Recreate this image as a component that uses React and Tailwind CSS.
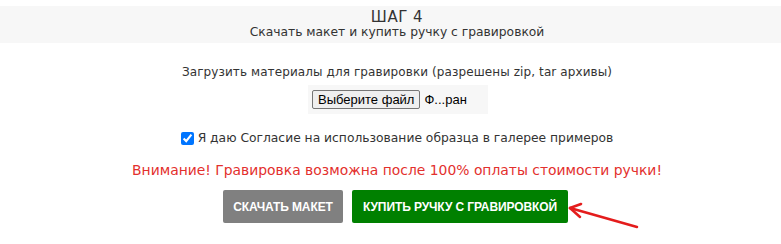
import { useState } from "react";

const sans = { fontFamily: '"DejaVu Sans", "Noto Sans", sans-serif' };
const arial = { fontFamily: '"Liberation Sans", Arial, sans-serif' };

const App = () => {
  const [agree, setAgree] = useState(true);

  return (
    <div className="w-[781px] h-[244px] bg-white overflow-hidden pt-[6px]" style={sans}>
      {/* step header */}
      <div className="bg-[#f7f7f7] h-[37px] flex flex-col items-center pt-[4px] pl-[13px]">
        <div className="text-[15px] leading-[15px] tracking-[0.5px] text-[#333]">ШАГ 4</div>
        <div className="text-[12.3px] leading-[14px] text-[#333]">
          Скачать макет и купить ручку с гравировкой
        </div>
      </div>

      <div className="flex flex-col items-center pl-[13px]">
        <p className="mt-[21px] text-[12px] tracking-[0.1px] leading-[16px] text-[#333]">
          Загрузить материалы для гравировки (разрешены zip, tar архивы)
        </p>

        <div className="mt-[5px] ml-[2px] w-[180px] h-[29px] bg-[#f7f7f7] flex items-center pl-[4px]">
          <label className="flex items-center gap-[4px] text-[13px] text-black" style={arial}>
            <span className="h-[19px] px-[5px] flex items-center bg-[#efefef] border border-[#767676] rounded-[2px]">
              Выберите файл
            </span>
            <span>Ф...ран</span>
            <input type="file" className="hidden" />
          </label>
        </div>

        <label className="mt-[16px] flex items-center gap-[4px] text-[12.3px] leading-[16px] text-[#333]">
          <input
            type="checkbox"
            checked={agree}
            onChange={(e) => setAgree(e.target.checked)}
            className="w-[13px] h-[13px] accent-[#0075ff]"
          />
          Я даю Согласие на использование образца в галерее примеров
        </label>

        <p className="mt-[15px] text-[13.9px] leading-[18px] text-[#e3302d]">
          Внимание! Гравировка возможна после 100% оплаты стоимости ручки!
        </p>

        <div className="mt-[11px] ml-[-3px] flex items-center gap-[9px]">
          <button
            className="w-[120px] h-[33px] rounded-[2px] bg-[#808080] text-white text-[12px] font-bold uppercase tracking-[-0.1px]"
            style={arial}
          >
            Скачать макет
          </button>
          <div className="relative">
            <button
              className="w-[216px] h-[33px] rounded-[2px] bg-[#008000] text-white text-[12px] font-bold uppercase tracking-[-0.1px]"
              style={arial}
            >
              Купить ручку с гравировкой
            </button>
            {/* hint arrow */}
            <svg
              className="absolute left-[214px] top-[12px]"
              width="74"
              height="28"
              viewBox="0 0 74 28"
              fill="none"
              stroke="#e41c1c"
              strokeWidth="2.5"
              strokeLinecap="round"
            >
              <path d="M4 6 L71 25" />
              <path d="M4 6 L15 2" />
              <path d="M4 6 L14 15" />
            </svg>
          </div>
        </div>
      </div>
    </div>
  );
};

export default App;
